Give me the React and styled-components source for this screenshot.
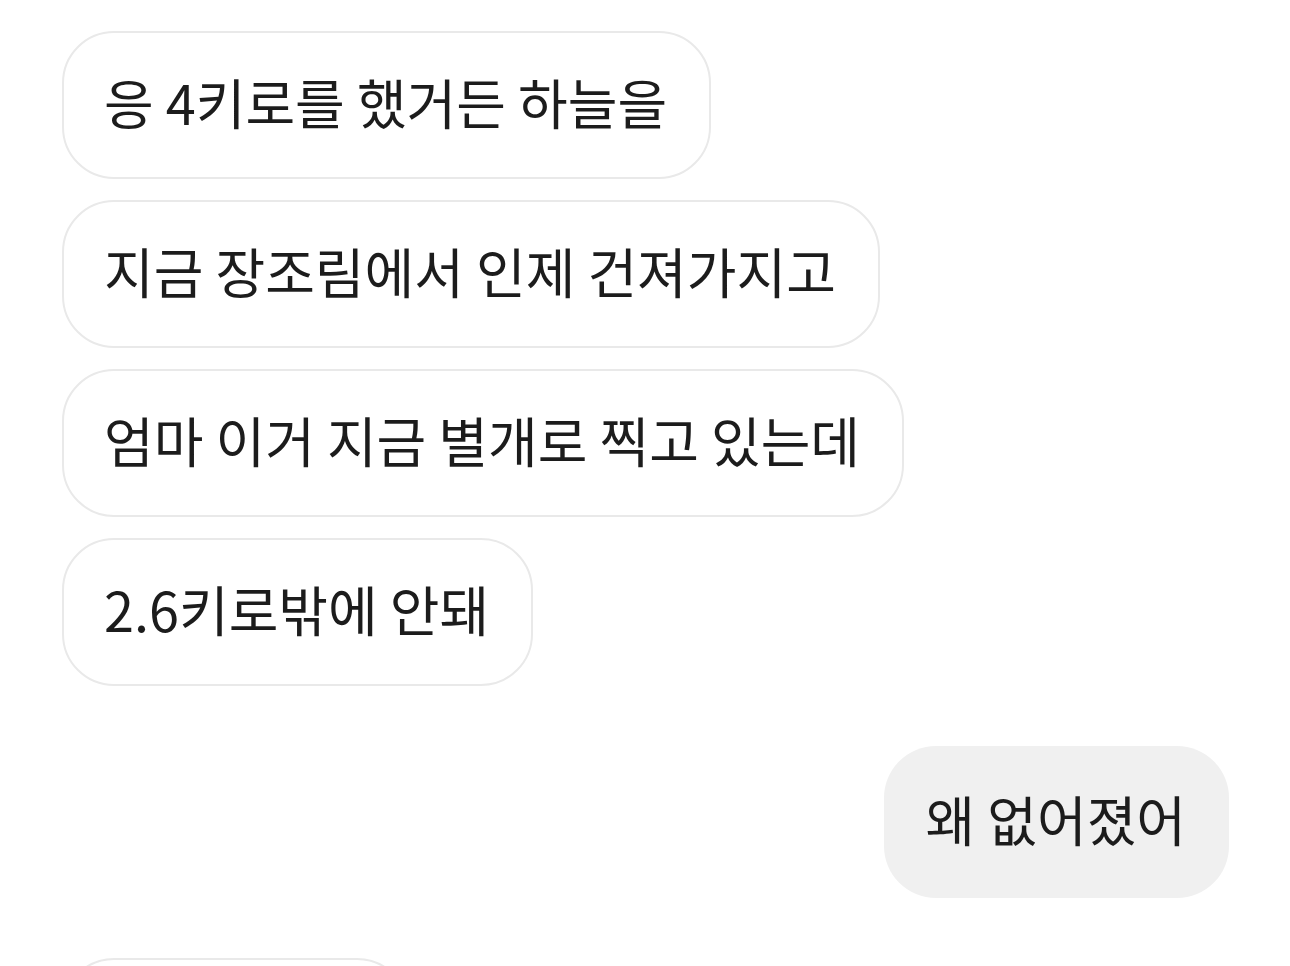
import React from 'react';
import styled, { createGlobalStyle } from 'styled-components';

const GlobalStyle = createGlobalStyle`
  html, body {
    margin: 0;
    padding: 0;
    background: #ffffff;
  }

  body {
    font-family: 'Noto Sans CJK KR', 'Noto Sans', sans-serif;
    color: #1c1c1c;
    overflow: hidden;
  }
`;

const Thread = styled.div`
  display: flex;
  flex-direction: column;
  padding: 31px 61px 0 62px;
  height: 966px;
  box-sizing: border-box;
  overflow: hidden;
`;

const Group = styled.div`
  display: flex;
  flex-direction: column;
  align-items: ${({ $mine }) => ($mine ? 'flex-end' : 'flex-start')};
  gap: 21px;

  & + & {
    margin-top: 60px;
  }
`;

const Bubble = styled.div`
  box-sizing: border-box;
  font-size: 54px;
  line-height: 70px;
  white-space: nowrap;
  border-radius: 52px;
  padding: ${({ $mine }) => ($mine ? '38px 43px 44px 42px' : '34px 42px 40px 40px')};
  background: ${({ $mine }) => ($mine ? '#f0f0f0' : '#ffffff')};
  border: ${({ $mine }) => ($mine ? 'none' : '2px solid #e9e9e9')};
  flex-shrink: 0;
`;

const messages = [
  { mine: false, lines: ['응 4키로를 했거든 하늘을', '지금 장조림에서 인제 건져가지고', '엄마 이거 지금 별개로 찍고 있는데', '2.6키로밖에 안돼'] },
  { mine: true, lines: ['왜 없어졌어'] },
  { mine: false, lines: ['그래서 그래'] },
];

export default function App() {
  return (
    <>
      <GlobalStyle />
      <Thread>
        {messages.map((group, i) => (
          <Group key={i} $mine={group.mine}>
            {group.lines.map((line, j) => (
              <Bubble key={j} $mine={group.mine}>
                {line}
              </Bubble>
            ))}
          </Group>
        ))}
      </Thread>
    </>
  );
}
